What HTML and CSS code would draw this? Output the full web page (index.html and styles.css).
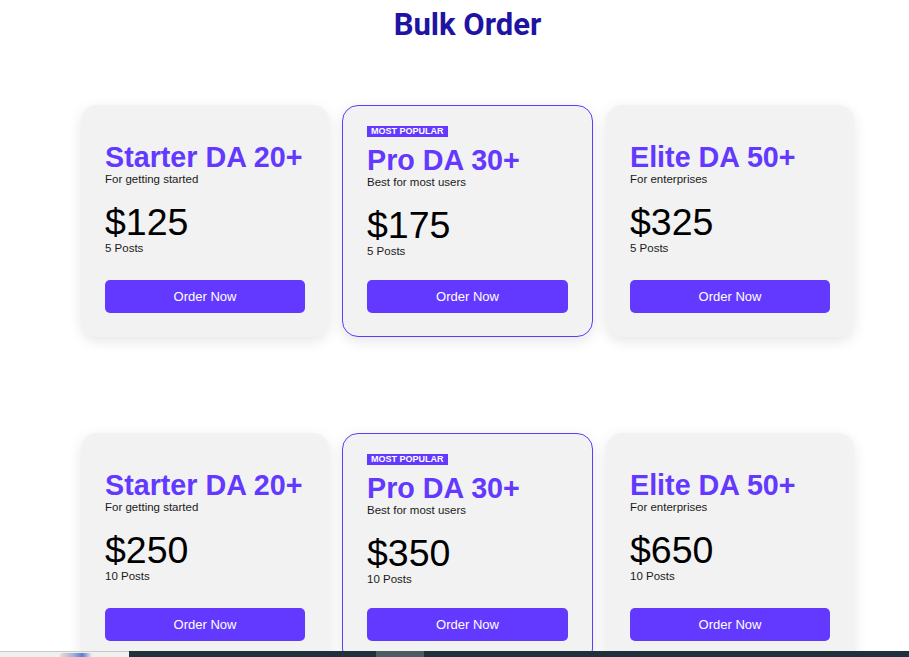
FILE: index.html
```html
<!DOCTYPE html>
<html lang="en">
<head>
<meta charset="utf-8">
<title>Bulk Order</title>
<link rel="stylesheet" href="styles.css">
</head>
<body>
<main class="page">
  <h1 class="page-title">Bulk Order</h1>

  <section class="plans">
    <div class="card">
      <h2 class="plan-name">Starter DA 20+</h2>
      <p class="plan-desc">For getting started</p>
      <p class="price">$125</p>
      <p class="posts">5 Posts</p>
      <button class="order-btn">Order Now</button>
    </div>
    <div class="card card-popular">
      <span class="badge">MOST POPULAR</span>
      <h2 class="plan-name">Pro DA 30+</h2>
      <p class="plan-desc">Best for most users</p>
      <p class="price">$175</p>
      <p class="posts">5 Posts</p>
      <button class="order-btn">Order Now</button>
    </div>
    <div class="card">
      <h2 class="plan-name">Elite DA 50+</h2>
      <p class="plan-desc">For enterprises</p>
      <p class="price">$325</p>
      <p class="posts">5 Posts</p>
      <button class="order-btn">Order Now</button>
    </div>
  </section>

  <section class="plans plans-second">
    <div class="card">
      <h2 class="plan-name">Starter DA 20+</h2>
      <p class="plan-desc">For getting started</p>
      <p class="price">$250</p>
      <p class="posts">10 Posts</p>
      <button class="order-btn">Order Now</button>
    </div>
    <div class="card card-popular">
      <span class="badge">MOST POPULAR</span>
      <h2 class="plan-name">Pro DA 30+</h2>
      <p class="plan-desc">Best for most users</p>
      <p class="price">$350</p>
      <p class="posts">10 Posts</p>
      <button class="order-btn">Order Now</button>
    </div>
    <div class="card">
      <h2 class="plan-name">Elite DA 50+</h2>
      <p class="plan-desc">For enterprises</p>
      <p class="price">$650</p>
      <p class="posts">10 Posts</p>
      <button class="order-btn">Order Now</button>
    </div>
  </section>
</main>

<div class="taskbar">
  <div class="taskbar-left"><span class="taskbar-thumb"></span></div>
  <div class="taskbar-right"><span class="taskbar-tab"></span></div>
</div>
</body>
</html>
```

FILE: styles.css
```css
* {
  box-sizing: border-box;
}

html, body {
  margin: 0;
  padding: 0;
  background: #ffffff;
  overflow: hidden;
}

body {
  font-family: "Liberation Sans", Arial, sans-serif;
  color: #111;
}

.page {
  padding-left: 26px;
  display: flex;
  flex-direction: column;
  align-items: center;
}

.page-title {
  font-family: Roboto, "Liberation Sans", sans-serif;
  font-weight: 700;
  font-size: 31px;
  line-height: 34px;
  color: #1f14a1;
  margin: 8px 0 0;
}

.plans {
  display: flex;
  gap: 13px;
  margin-top: 63px;
  align-items: stretch;
}

.plans-second {
  margin-top: 96px;
}

.card {
  width: 248px;
  height: 232px;
  background: #f2f2f2;
  border-radius: 16px;
  padding: 37px 24px 24px;
  display: flex;
  flex-direction: column;
  align-items: flex-start;
  box-shadow: 0 4px 14px rgba(0, 0, 0, 0.10);
}

.card-popular {
  width: 251px;
  border: 1px solid #6339ff;
  padding: 20px 24px 23px;
}

.badge {
  display: block;
  background: #6339ff;
  color: #fff;
  font-weight: 700;
  font-size: 9px;
  line-height: 11px;
  height: 11px;
  padding: 0 4px;
  margin-bottom: 8px;
}

.plan-name {
  margin: 0;
  font-size: 28.7px;
  line-height: 30px;
  font-weight: 700;
  color: #6339ff;
  white-space: nowrap;
}

.plan-desc {
  margin: 0;
  font-size: 11.5px;
  line-height: 14px;
  color: #1a1a1a;
}

.price {
  margin: 17px 0 0;
  font-size: 37.5px;
  line-height: 38px;
  color: #000;
}

.posts {
  margin: 0;
  font-size: 11.5px;
  line-height: 14px;
  color: #1a1a1a;
}

.order-btn {
  margin-top: auto;
  width: 100%;
  height: 33px;
  border: none;
  border-radius: 5px;
  background: #6339ff;
  color: #fff;
  font-family: "Liberation Sans", Arial, sans-serif;
  font-size: 13px;
  padding: 0;
  cursor: pointer;
}

.taskbar {
  position: fixed;
  left: 0;
  right: 0;
  bottom: 0;
  height: 6px;
  display: flex;
}

.taskbar-left {
  width: 129px;
  background: #f0f0f0;
  border-top: 1px solid #c9c9c9;
  position: relative;
}

.taskbar-thumb {
  position: absolute;
  left: 60px;
  top: 1px;
  width: 32px;
  height: 5px;
  border-radius: 3px 3px 0 0;
  background: linear-gradient(90deg, #f3d9c2 0%, #9fb6e0 40%, #5c7fc9 70%, #e9eef8 100%);
}

.taskbar-right {
  flex: 1;
  background: #1f323b;
  position: relative;
}

.taskbar-tab {
  position: absolute;
  left: 247px;
  top: 0;
  width: 48px;
  height: 6px;
  background: #4c5c62;
}
```
